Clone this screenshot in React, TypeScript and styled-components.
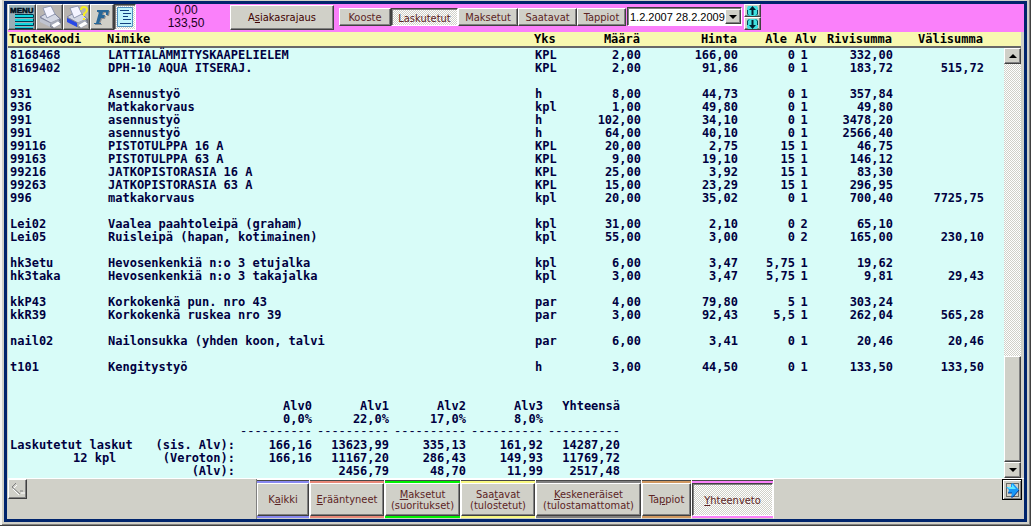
import React from "react";
import styled, { createGlobalStyle, css } from "styled-components";

const face = "#d0d0c8";
const navy = "#00246c";
const dither = css`
  background: repeating-conic-gradient(#ffffff 0 25%, #d0d0c8 0 50%) 0 0 / 2px 2px;
`;
const raised = css`
  border: 1px solid;
  border-color: #ffffff #404040 #404040 #ffffff;
  box-shadow: inset -1px -1px 0 #808080;
`;
const sunken = css`
  border: 1px solid;
  border-color: #404040 #ffffff #ffffff #404040;
  box-shadow: inset 1px 1px 0 #808080;
`;

const GlobalStyle = createGlobalStyle`
  * { box-sizing: border-box; }
  body { margin: 0; background: ${face}; }
  button { font: inherit; color: inherit; padding: 0; margin: 0; }
`;

const Frame = styled.div`
  min-height: 100vh;
  display: flex;
  padding: 1px 4px 4px 4px;
  background: ${face};
  box-shadow: inset -1px -1px 0 #404040, inset 2px 0 0 #f4f4f0, inset -2px -2px 0 #808080;
  font: 11px/11px "DejaVu Sans Condensed", "DejaVu Sans", sans-serif;
  color: #5c2424;
`;
const Panel = styled.main`
  flex: 1;
  min-width: 0;
  display: flex;
  flex-direction: column;
  padding-left: 1px;
  border: 3px solid ${navy};
  background: ${face};
`;

const Toolbar = styled.header`
  height: 28px;
  display: flex;
  align-items: flex-start;
  background: #fa80fa;
`;
const IconButton = styled.button<{ $w: number; $on?: boolean; $tone?: string }>`
  width: ${(p) => p.$w}px;
  height: 26px;
  display: flex;
  align-items: center;
  justify-content: center;
  background: ${(p) => p.$tone ?? face};
  ${(p) => (p.$on ? sunken : raised)}
  ${(p) => p.$on && dither}
`;
const Readout = styled.div`
  width: 94px;
  padding-left: 6px;
  text-align: center;
  color: #200020;
  font: 12px/13px "Liberation Sans", Arial, sans-serif;
`;
const FilterButton = styled.button`
  width: 104px;
  height: 25px;
  margin: 1px 5px 0 0;
  background: ${face};
  color: #400000;
  ${raised}
`;
const ViewTabs = styled.div`
  display: flex;
  margin: 4px 1px 0 0;
`;
const ViewTab = styled.button<{ $w: number; $on?: boolean }>`
  width: ${(p) => p.$w}px;
  height: 18px;
  background: ${face};
  ${(p) => (p.$on ? sunken : raised)}
  ${(p) => p.$on && dither}
  && { padding-top: ${(p) => (p.$on ? 2 : 0)}px; }
`;
const PeriodBox = styled.label`
  position: relative;
  display: flex;
  width: 115px;
  height: 19px;
  margin: 3px 2px 0 0;
  background: #fff;
  ${sunken}
`;
const PeriodSelect = styled.select`
  appearance: none;
  width: 100%;
  padding: 0 0 0 2px;
  border: 0;
  background: transparent;
  color: #000;
  font: 11px/16px "Liberation Sans", Arial, sans-serif;
`;
const DropMark = styled.span`
  position: absolute;
  right: 0;
  top: 1px;
  width: 16px;
  height: 15px;
  display: flex;
  align-items: center;
  justify-content: center;
  background: ${face};
  pointer-events: none;
  ${raised}
`;
const Stepper = styled.div`
  display: flex;
  flex-direction: column;
`;
const StepButton = styled.button`
  width: 17px;
  height: 13px;
  display: flex;
  align-items: center;
  justify-content: center;
  background: ${face};
  ${raised}
`;

const Report = styled.section`
  flex: 1;
  display: flex;
  min-height: 0;
  margin-right: 3px;
`;
const Sheet = styled.div`
  flex: 1;
  min-width: 0;
  background: #d8fcf8;
  color: #000040;
  font: bold 12px/13px "DejaVu Sans Mono", monospace;
`;
const Lines = styled.table`
  width: 100%;
  table-layout: fixed;
  border-collapse: separate;
  border-spacing: 0;
  white-space: pre;
  th, td { padding: 0; font-weight: bold; }
  thead th {
    height: 16px;
    background: #f8f8b0;
    border-bottom: 2px solid #686868;
    color: #000;
  }
  tbody tr { height: 13px; }
  tbody td { padding-top: 2px; line-height: 11px; }
`;
type Align = "left" | "right" | "center";
const Head = styled.th<{ $align?: Align; $inset?: number }>`
  text-align: ${(p) => p.$align ?? "left"};
  && { padding-right: ${(p) => p.$inset ?? 0}px; padding-left: ${(p) => (p.$align ? 0 : 1)}px; }
`;
const Cell = styled.td<{ $align?: Align }>`
  text-align: ${(p) => p.$align ?? "left"};
  && { padding-left: ${(p) => (p.$align ? 0 : 2)}px; }
`;
const Totals = styled.table`
  margin-top: 26px;
  table-layout: fixed;
  width: 612px;
  border-spacing: 0;
  white-space: pre;
  th, td {
    height: 13px;
    padding: 2px 0 0;
    text-align: right;
    font-weight: bold;
    line-height: 11px;
  }
`;
const Rule = styled.td`
  && {
    font-family: "Liberation Mono", monospace;
    font-weight: normal;
  }
`;
const Caption = styled.th<{ $indent: number }>`
  && { text-align: left; padding-left: ${(p) => p.$indent}px; }
`;

const ScrollColumn = styled.div`
  width: 17px;
  display: flex;
  flex-direction: column;
`;
const ScrollCap = styled.div`
  height: 16px;
  background: #f8f8b0;
  border-bottom: 2px solid #686868;
`;
const ScrollTrack = styled.div`
  flex: 1;
  display: flex;
  flex-direction: column;
  justify-content: flex-end;
  ${dither}
`;
const Thumb = styled.div`
  height: 106px;
  background: ${face};
  ${raised}
`;
const ScrollButton = styled.button`
  height: 16px;
  display: flex;
  align-items: center;
  justify-content: center;
  background: ${face};
  ${raised}
`;

const Footer = styled.footer`
  height: 41px;
  display: flex;
  align-items: flex-start;
  border-top: 1px solid #fff;
`;
const BackButton = styled.button`
  width: 19px;
  height: 20px;
  background: ${face};
  ${raised}
`;
const NextButton = styled.button`
  width: 20px;
  height: 21px;
  margin: 0 2px 0 auto;
  display: flex;
  align-items: center;
  justify-content: center;
  background: ${face};
  border: 1px solid #000;
  box-shadow: inset 1px 1px 0 #fff, inset -1px -1px 0 #808080;
`;
const Groups = styled.nav`
  display: flex;
  margin-left: 229px;
  border-left: 1px solid #808080;
`;
const Group = styled.div<{ $w: number; $color: string }>`
  width: ${(p) => p.$w}px;
  height: 40px;
  border-top: 1px solid #fff;
  border-right: 1px solid #fff;
  border-bottom: 1px solid ${face};
  display: flex;
  background: ${(p) => p.$color};
  box-shadow: inset 0 1px 0 #484848;
`;
const GroupButton = styled.button<{ $on?: boolean }>`
  flex: 1;
  margin: 3px 0 2px;
  background: ${face};
  ${(p) => (p.$on ? sunken : raised)}
  ${(p) => p.$on && dither}
  && { padding-top: ${(p) => (p.$on ? 2 : 0)}px; }
`;

type Line = [string, string, string, string, string, string, string, string, string?];
const lines: (Line | null)[] = [
  ["8168468", "LATTIALÄMMITYSKAAPELIELEM", "KPL", "2,00", "166,00", "0", "1", "332,00"],
  ["8169402", "DPH-10 AQUA ITSERAJ.", "KPL", "2,00", "91,86", "0", "1", "183,72", "515,72"],
  null,
  ["931", "Asennustyö", "h", "8,00", "44,73", "0", "1", "357,84"],
  ["936", "Matkakorvaus", "kpl", "1,00", "49,80", "0", "1", "49,80"],
  ["991", "asennustyö", "h", "102,00", "34,10", "0", "1", "3478,20"],
  ["991", "asennustyö", "h", "64,00", "40,10", "0", "1", "2566,40"],
  ["99116", "PISTOTULPPA 16 A", "KPL", "20,00", "2,75", "15", "1", "46,75"],
  ["99163", "PISTOTULPPA 63 A", "KPL", "9,00", "19,10", "15", "1", "146,12"],
  ["99216", "JATKOPISTORASIA 16 A", "KPL", "25,00", "3,92", "15", "1", "83,30"],
  ["99263", "JATKOPISTORASIA 63 A", "KPL", "15,00", "23,29", "15", "1", "296,95"],
  ["996", "matkakorvaus", "kpl", "20,00", "35,02", "0", "1", "700,40", "7725,75"],
  null,
  ["Lei02", "Vaalea paahtoleipä (graham)", "kpl", "31,00", "2,10", "0", "2", "65,10"],
  ["Lei05", "Ruisleipä (hapan, kotimainen)", "kpl", "55,00", "3,00", "0", "2", "165,00", "230,10"],
  null,
  ["hk3etu", "Hevosenkenkiä n:o 3 etujalka", "kpl", "6,00", "3,47", "5,75", "1", "19,62"],
  ["hk3taka", "Hevosenkenkiä n:o 3 takajalka", "kpl", "3,00", "3,47", "5,75", "1", "9,81", "29,43"],
  null,
  ["kkP43", "Korkokenkä pun. nro 43", "par", "4,00", "79,80", "5", "1", "303,24"],
  ["kkR39", "Korkokenkä ruskea nro 39", "par", "3,00", "92,43", "5,5", "1", "262,04", "565,28"],
  null,
  ["nail02", "Nailonsukka (yhden koon, talvi", "par", "6,00", "3,41", "0", "1", "20,46", "20,46"],
  null,
  ["t101", "Kengitystyö", "h", "3,00", "44,50", "0", "1", "133,50", "133,50"],
];
const aligns: (Align | undefined)[] = [
  undefined, undefined, undefined, "right", "right", "right", "center", "right", "right",
];
const lineWidths = [98, 0, 35, 73, 97, 57, 18, 80, 91, 20];

const totals: [string, number, string, string[]][] = [
  ["Laskutetut laskut", 2, "(sis. Alv):", ["166,16", "13623,99", "335,13", "161,92", "14287,20"]],
  ["12 kpl", 65, "(Veroton):", ["166,16", "11167,20", "286,43", "149,93", "11769,72"]],
  ["", 2, "(Alv):", ["", "2456,79", "48,70", "11,99", "2517,48"]],
];

const views: [string, number][] = [
  ["Kooste", 52], ["Laskutetut", 67], ["Maksetut", 60], ["Saatavat", 59], ["Tappiot", 49],
];

const groups: [React.ReactNode, number, string][] = [
  [<>K<u>a</u>ikki</>, 53, "#8888f0"],
  [<><u>E</u>rääntyneet</>, 75, "#e88878"],
  [<><u>M</u>aksetut<br />(suoritukset)</>, 76, "#00f000"],
  [<>Saa<u>t</u>avat<br />(tulostetut)</>, 75, "#f8f880"],
  [<><u>K</u>eskeneräiset<br />(tulostamattomat)</>, 106, "#808080"],
  [<>Ta<u>p</u>piot</>, 50, "#d09860"],
  [<><u>Y</u>hteenveto</>, 82, "#fa80fa"],
];

const Triangle = ({ up }: { up?: boolean }) => (
  <svg width="8" height="4" viewBox="0 0 8 4" aria-hidden="true">
    <path d={up ? "M0 4 4 0 8 4z" : "M0 0h8L4 4z"} fill="#000" />
  </svg>
);

const StepArrow = ({ down }: { down?: boolean }) => (
  <svg width="11" height="10" viewBox="0 0 11 10" aria-hidden="true">
    <g transform={down ? "rotate(180 5.5 5)" : undefined}>
      <path d="M1 0h9l1 2v6l-1 2H1L0 8V2z" fill="#40e0e0" />
      <path d="M.5 4v4l1.500 1.500M10.500 4v4L9 9.500" fill="none" stroke="#004858" />
      <path d="M5.500 0 9 4H6.500v5h-2V4H2z" fill="#002030" />
    </g>
  </svg>
);

const MenuIcon = () => (
  <svg width="25" height="24" viewBox="0 0 25 24" aria-hidden="true">
    <text x="0" y="8" fontFamily="Liberation Sans" fontWeight="bold" fontSize="8" fill="#001020" stroke="#001020" strokeWidth="0.500">MENU</text>
    <path d="M5 10h18v2H5zM5 14h18v2H5zM5 18h18v2H5zM5 22h18v1H5z" fill="#10d8e0" />
    <path d="M5 9.500h18M5 12.500h18.500v-3M5 16.500h18.500v-3M5 20.500h18.500v-3M5 23.500h18" fill="none" stroke="#003850" />
  </svg>
);

const PrinterIcon = ({ help }: { help?: boolean }) => (
  <svg width="24" height="24" viewBox="0 0 24 24" aria-hidden="true">
    <path d="M2 12 9 8l8 1 6 5v4l-9 5-12-7z" fill="#787c88" />
    <path d="M2 12 9 8l8 1 5 5-9 4z" fill="#d4d8e4" stroke="#8488a0" />
    <path d="M5 3 13 1l4 8-8 4z" fill="#f4f4ff" stroke="#9098b0" />
    <path d="M2 13v4l10 5v-4z" fill={help ? "#2848e8" : "#c0c4d0"} />
    <path d="M12 18 20 14l2 3-9 5z" fill="#a8acb8" />
    <path d="M13 20l7-4 3 3-7 4z" fill="#ffffff" stroke="#8088a0" strokeWidth="0.500" />
    {help && (
      <>
        <path d="M16 5q0-3 3-3t3 3q0 2-3 4v2" fill="none" stroke="#f8f020" strokeWidth="2" />
        <path d="M18 13h2v2h-2z" fill="#f8f020" />
      </>
    )}
  </svg>
);

const FontIcon = () => (
  <svg width="18" height="18" viewBox="0 0 18 18" aria-hidden="true">
    <path d="M5 3h12l-1 5h-2V5h-3l-1 3h3l-1 3H9l-2 5h2v1H2v-1h2L7 5H5z" fill="#909090" />
    <path d="M4 2h12l-1 5h-2V4h-3L9 7h3l-1 3H8l-2 5h2v1H1v-1h2L6 4H4z" fill="#286898" />
  </svg>
);

const ListIcon = () => (
  <svg width="18" height="22" viewBox="0 0 18 22" aria-hidden="true">
    <path d="M1.500 1.500h15v19h-15z" fill="#c0f4fc" stroke="#5090c0" />
    <path d="M4 4.500h9M7 7.500h8M7 10.500h5M7 13.500h8M4 17.500h11" stroke="#104080" />
  </svg>
);

const BackIcon = () => (
  <svg width="14" height="14" viewBox="0 0 14 14" aria-hidden="true">
    <path d="M5 3 1 7l7 7M9 11h4" transform="translate(1 1)" fill="none" stroke="#fff" />
    <path d="M5 2 1 6l8 7M9 10h3" fill="none" stroke="#808080" />
  </svg>
);

const NextIcon = () => (
  <svg width="15" height="16" viewBox="0 0 15 16" aria-hidden="true">
    <path d="M1.500 1.500h12v13h-12z" fill="none" stroke="#000" strokeDasharray="1 1" />
    <path d="M1 5h5V2l2-1 6 7-6 7H6l1-4H3l1-3z" fill="#1898f8" />
    <path d="M2 5h5V2l4 5H4z" fill="#60e8ff" />
    <path d="M14 8l-6 7H6M3 11h4" fill="none" stroke="#083890" />
  </svg>
);

export default function App() {
  return (
    <Frame>
      <GlobalStyle />
      <Panel>
        <Toolbar>
          <IconButton $w={28} $tone="#98b0b8" aria-label="Menu"><MenuIcon /></IconButton>
          <IconButton $w={27} $tone="#b8b4b0" aria-label="Tulosta"><PrinterIcon /></IconButton>
          <IconButton $w={27} $tone="#b8b4b0" aria-label="Tulostusasetukset"><PrinterIcon help /></IconButton>
          <IconButton $w={24} aria-label="Fontti"><FontIcon /></IconButton>
          <IconButton $w={22} $on aria-label="Luettelo" aria-pressed="true"><ListIcon /></IconButton>
          <Readout>
            <div>0,00</div>
            <div>133,50</div>
          </Readout>
          <FilterButton>A<u>s</u>iakasrajaus</FilterButton>
          <ViewTabs>
            {views.map(([label, w], i) => (
              <ViewTab key={label} $w={w} $on={i === 1} aria-pressed={i === 1}>{label}</ViewTab>
            ))}
          </ViewTabs>
          <PeriodBox>
            <PeriodSelect aria-label="Jakso">
              <option>1.2.2007 28.2.2009</option>
            </PeriodSelect>
            <DropMark><Triangle /></DropMark>
          </PeriodBox>
          <Stepper>
            <StepButton aria-label="Seuraava jakso"><StepArrow /></StepButton>
            <StepButton aria-label="Edellinen jakso"><StepArrow down /></StepButton>
          </Stepper>
        </Toolbar>

        <Report>
          <Sheet>
            <Lines>
              <colgroup>
                {lineWidths.map((w, i) => <col key={i} width={w || undefined} />)}
              </colgroup>
              <thead>
                <tr>
                  <Head>TuoteKoodi</Head>
                  <Head>Nimike</Head>
                  <Head>Yks</Head>
                  <Head $align="right" $inset={1}>Määrä</Head>
                  <Head $align="right" $inset={1}>Hinta</Head>
                  <Head $align="right" $inset={8}>Ale</Head>
                  <Head $align="center">Alv</Head>
                  <Head $align="right" $inset={1}>Rivisumma</Head>
                  <Head $align="right" $inset={1}>Välisumma</Head>
                  <Head />
                </tr>
              </thead>
              <tbody>
                {lines.map((line, r) => (
                  <tr key={r}>
                    {line
                      ? aligns.map((a, c) => <Cell key={c} $align={a}>{line[c]}</Cell>)
                      : <Cell colSpan={9} />}
                  </tr>
                ))}
              </tbody>
            </Lines>
            <Totals>
              <colgroup>
                <col width="140" />
                <col width="87" />
                {[0, 1, 2, 3, 4].map((i) => <col key={i} width="77" />)}
              </colgroup>
              <thead>
                <tr>
                  <td /><td />
                  {["Alv0", "Alv1", "Alv2", "Alv3", "Yhteensä"].map((t) => <th key={t}>{t}</th>)}
                </tr>
                <tr>
                  <td /><td />
                  {["0,0%", "22,0%", "17,0%", "8,0%", ""].map((t) => <th key={t}>{t}</th>)}
                </tr>
              </thead>
              <tbody>
                <tr>
                  <td /><td />
                  {[0, 1, 2, 3, 4].map((i) => <Rule key={i}>----------</Rule>)}
                </tr>
                {totals.map(([name, indent, kind, sums]) => (
                  <tr key={kind}>
                    <Caption $indent={indent}>{name}</Caption>
                    <th>{kind}</th>
                    {sums.map((s, i) => <td key={i}>{s}</td>)}
                  </tr>
                ))}
              </tbody>
            </Totals>
          </Sheet>
          <ScrollColumn>
            <ScrollCap />
            <ScrollButton aria-label="Ylös"><Triangle up /></ScrollButton>
            <ScrollTrack><Thumb /></ScrollTrack>
            <ScrollButton aria-label="Alas"><Triangle /></ScrollButton>
          </ScrollColumn>
        </Report>

        <Footer>
          <BackButton aria-label="Takaisin" disabled><BackIcon /></BackButton>
          <Groups>
            {groups.map(([label, w, color], i) => (
              <Group key={i} $w={w} $color={color}>
                <GroupButton $on={i === 6} aria-pressed={i === 6}>{label}</GroupButton>
              </Group>
            ))}
          </Groups>
          <NextButton aria-label="Seuraava"><NextIcon /></NextButton>
        </Footer>
      </Panel>
    </Frame>
  );
}
